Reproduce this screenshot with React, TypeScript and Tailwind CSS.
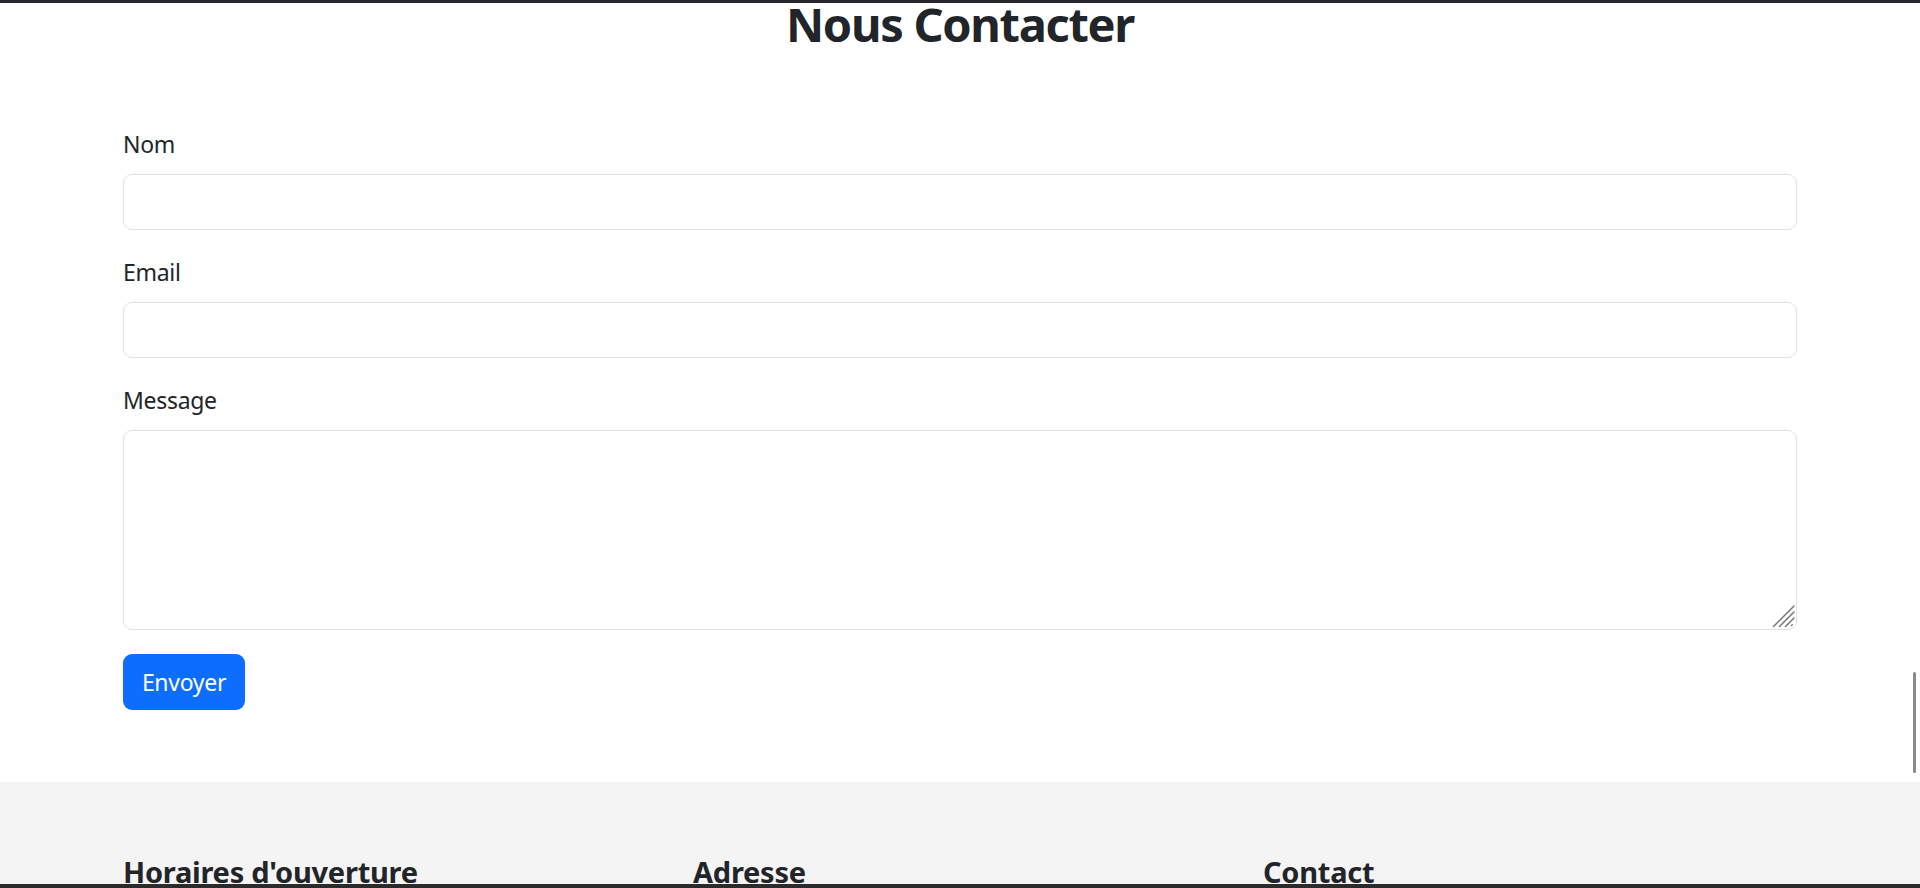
export default function App() {
  return (
    <div
      className="relative flex h-screen flex-col overflow-hidden bg-white text-[#212529]"
      style={{ fontFamily: '"Noto Sans", "Open Sans", sans-serif' }}
    >
      <div className="h-[3px] shrink-0 bg-[#27272d]" />

      <div className="flex-1 overflow-hidden">
        {/* contact form */}
        <section className="-mt-[7px] pb-[72px]">
          <div className="mx-auto w-[1674px]">
            <h2 className="mb-[72px] text-center text-[47px] font-bold leading-[57.6px] tracking-[-1.3px]">
              Nous Contacter
            </h2>

            <form onSubmit={(e) => e.preventDefault()}>
              <div className="mb-[24px]">
                <label className="mb-[12px] block pt-[1px] text-[23px] leading-[35px] tracking-[-0.3px]">Nom</label>
                <input
                  type="text"
                  className="block h-[56px] w-full rounded-[9px] border border-[#dee2e6] bg-white px-[18px] text-[23px] outline-none"
                />
              </div>

              <div className="mb-[24px]">
                <label className="mb-[12px] block pt-[1px] text-[23px] leading-[35px] tracking-[-0.3px]">Email</label>
                <input
                  type="email"
                  className="block h-[56px] w-full rounded-[9px] border border-[#dee2e6] bg-white px-[18px] text-[23px] outline-none"
                />
              </div>

              <div className="mb-[24px]">
                <label className="mb-[12px] block pt-[1px] text-[23px] leading-[35px] tracking-[-0.3px]">Message</label>
                <div className="relative">
                  <textarea
                    rows={5}
                    className="block h-[200px] w-full resize-none rounded-[9px] border border-[#dee2e6] bg-white px-[18px] py-[9px] text-[23px] outline-none"
                  />
                  {/* resize grip */}
                  <svg
                    className="pointer-events-none absolute bottom-[2px] right-[2px]"
                    width="24"
                    height="24"
                    viewBox="0 0 24 24"
                    fill="none"
                    stroke="#777"
                    strokeWidth="1.5"
                    strokeLinecap="round"
                  >
                    <path d="M2.5 22.5 L23 2" />
                    <path d="M8.5 22.5 L23 8" />
                    <path d="M14.5 22.5 L23 14" />
                    <path d="M20.5 21.5 L21.2 20.8" />
                  </svg>
                </div>
              </div>

              <button
                type="submit"
                className="flex h-[56px] w-[122px] items-center justify-center rounded-[9px] bg-[#0d6efd] text-[23px] leading-[36px] tracking-[-0.3px] text-white"
              >
                Envoyer
              </button>
            </form>
          </div>
        </section>

        {/* footer */}
        <footer className="bg-[#f4f4f4] pt-[72px] pb-[72px]">
          <div className="mx-auto grid w-[1674px] grid-cols-3 gap-x-[36px]">
            <div>
              <h5 className="text-[29px] font-bold leading-[36px] tracking-[-0.25px]">Horaires d'ouverture</h5>
            </div>
            <div>
              <h5 className="text-[29px] font-bold leading-[36px] tracking-[-0.25px]">Adresse</h5>
            </div>
            <div>
              <h5 className="text-[29px] font-bold leading-[36px] tracking-[-0.25px]">Contact</h5>
            </div>
          </div>
        </footer>
      </div>

      <div className="h-[4px] shrink-0 bg-[#2b2b2b]" />

      {/* overlay scrollbar */}
      <div className="absolute right-[4px] top-[672px] h-[101px] w-[3px] rounded-full bg-[#8a8a8a]" />
    </div>
  );
}
